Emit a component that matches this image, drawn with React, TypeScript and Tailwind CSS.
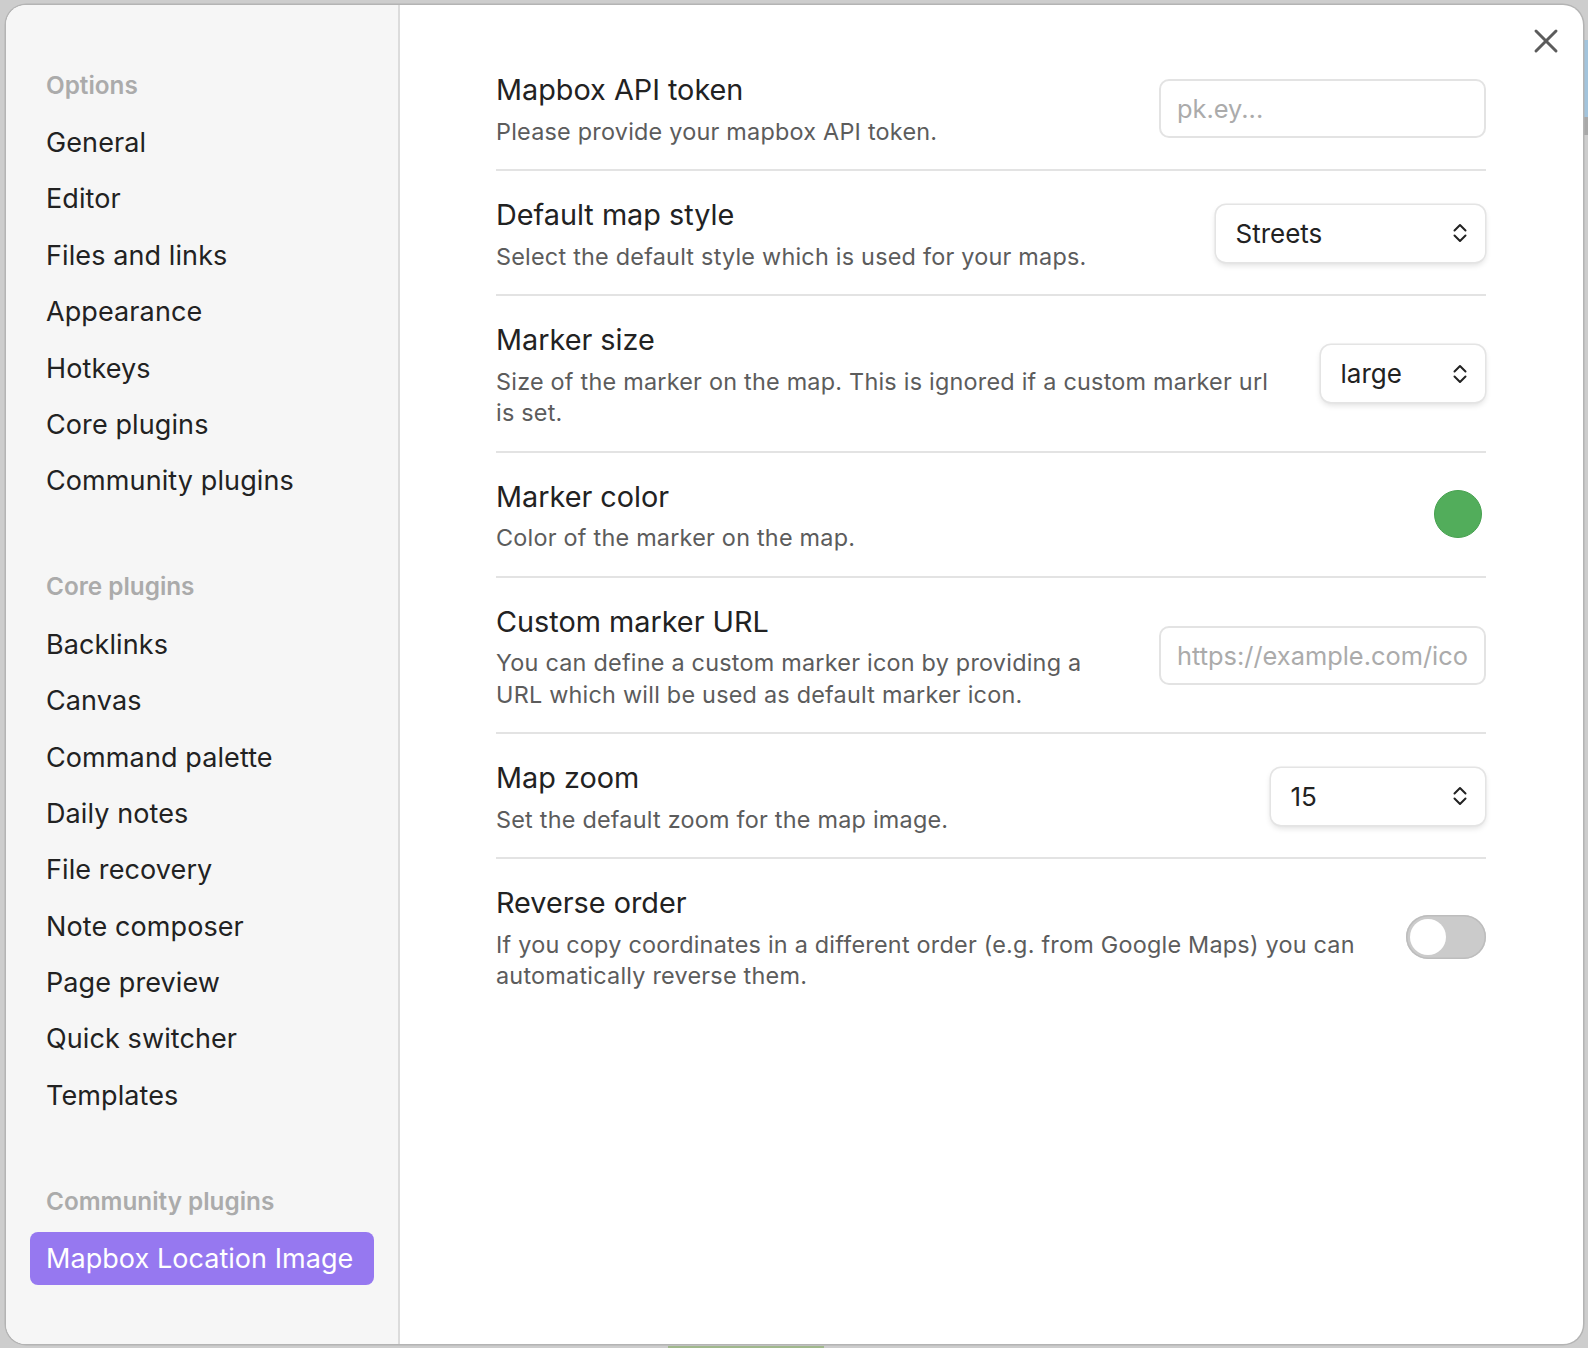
import { X } from "lucide-react";

const options = ["General", "Editor", "Files and links", "Appearance", "Hotkeys", "Core plugins", "Community plugins"];
const corePlugins = ["Backlinks", "Canvas", "Command palette", "Daily notes", "File recovery", "Note composer", "Page preview", "Quick switcher", "Templates"];

function GroupTitle({ title }: { title: string }) {
  return <div className="h-[54.5px] pl-[40px] pt-[6px] text-[24.3px] leading-[36px] font-semibold text-[#ababab]">{title}</div>;
}

function NavGroup({ title, items }: { title: string; items: string[] }) {
  return (
    <div className="mb-[52.5px]">
      <GroupTitle title={title} />
      {items.map((item) => (
        <div key={item} className="h-[56.4px] pl-[40px] text-[27px] leading-[56px] tracking-[0.1px] text-[#222222]">
          {item}
        </div>
      ))}
    </div>
  );
}

function Select({ value, width }: { value: string; width: string }) {
  return (
    <div className={`${width} mr-[1.5px] flex h-[57px] shrink-0 items-center justify-between rounded-[10px] bg-white pr-[18px] pl-[20px] text-[26px] text-[#222222] shadow-[0_0_0_1.5px_#e4e4e4,0_3px_6px_rgba(0,0,0,0.14)]`}>
      <span>{value}</span>
      <svg width="14" height="20" viewBox="0 0 14 20" fill="none" stroke="currentColor" strokeWidth="2" strokeLinecap="round" strokeLinejoin="round">
        <path d="M1.5 7.5 L7 2 L12.5 7.5 M1.5 12.5 L7 18 L12.5 12.5" />
      </svg>
    </div>
  );
}

function Input({ placeholder }: { placeholder: string }) {
  return (
    <div className="h-[59px] w-[327px] shrink-0 overflow-hidden rounded-[10px] border-2 border-[#e3e3e3] bg-white pl-[16px] text-[25.4px] leading-[55px] whitespace-nowrap text-[#ababab]">
      {placeholder}
    </div>
  );
}

function Row({ name, desc, children, last }: { name: string; desc: string[]; children: React.ReactNode; last?: boolean }) {
  return (
    <div className={`flex items-center justify-between gap-[40px] pt-[23px] pb-[22px] ${last ? "" : "border-b-2 border-[#e3e3e3]"}`}>
      <div>
        <div className="mb-[4.5px] text-[28.8px] leading-[42px] text-[#222222]">{name}</div>
        {desc.map((line) => (
          <div key={line} className="text-[23.4px] leading-[31.5px] tracking-[0.23px] whitespace-nowrap text-[#5c5c5c]">
            {line}
          </div>
        ))}
      </div>
      {children}
    </div>
  );
}

export default function App() {
  return (
    <div className="relative h-[1348px] w-[1588px] overflow-hidden bg-[#cdcdcd] pt-[5px] pl-[6px] font-['Inter',sans-serif]">
      {/* bits of the window behind the modal */}
      <div className="absolute top-[40px] right-0 h-[77px] w-[4px] bg-[#a3c4dc]" />
      <div className="absolute top-[117px] right-0 h-[18px] w-[4px] bg-[#a9a9a9]" />
      <div className="absolute bottom-0 left-[668px] h-[2px] w-[156px] bg-[#a0b88c]" />
      <div className="relative flex h-[1339px] w-[1577px] overflow-hidden rounded-[20px] bg-white shadow-[0_0_0_1.5px_#b4b4b4]">
        <aside className="h-full w-[394px] shrink-0 border-r-2 border-[#dcdcdc] bg-[#f6f6f6] pt-[55.5px]">
          <NavGroup title="Options" items={options} />
          <NavGroup title="Core plugins" items={corePlugins} />
          <GroupTitle title="Community plugins" />
          <div className="mt-[1px] ml-[24px] flex h-[53px] w-[344px] items-center rounded-[8px] bg-[#9678f0] pt-[1px] pl-[16px] text-[27px] tracking-[0.05px] text-white">
            Mapbox Location Image
          </div>
        </aside>
        <main className="relative min-w-0 flex-1 pt-[41px] pr-[97px] pl-[96px]">
          <X className="absolute top-[16px] right-[17px] size-[40px] text-[#5c5c5c]" strokeWidth={1.8} />
          <Row name="Mapbox API token" desc={["Please provide your mapbox API token."]}>
            <Input placeholder="pk.ey..." />
          </Row>
          <Row name="Default map style" desc={["Select the default style which is used for your maps."]}>
            <Select value="Streets" width="w-[269px]" />
          </Row>
          <Row name="Marker size" desc={["Size of the marker on the map. This is ignored if a custom marker url", "is set."]}>
            <Select value="large" width="w-[164px]" />
          </Row>
          <Row name="Marker color" desc={["Color of the marker on the map."]}>
            <div className="mr-[4px] mb-[1px] size-[48px] rounded-full border border-[#47a150] bg-[#52ad5b]" />
          </Row>
          <Row name="Custom marker URL" desc={["You can define a custom marker icon by providing a", "URL which will be used as default marker icon."]}>
            <Input placeholder="https://example.com/ico" />
          </Row>
          <Row name="Map zoom" desc={["Set the default zoom for the map image."]}>
            <Select value="15" width="w-[214px]" />
          </Row>
          <Row name="Reverse order" last desc={["If you copy coordinates in a different order (e.g. from Google Maps) you can", "automatically reverse them."]}>
            <div className="flex h-[44px] w-[80px] shrink-0 items-center rounded-full bg-[#cbcbcb] pl-[4px] shadow-[inset_0_0_0_1.5px_#bdbdbd]">
              <div className="size-[36px] rounded-full bg-white" />
            </div>
          </Row>
        </main>
      </div>
    </div>
  );
}
